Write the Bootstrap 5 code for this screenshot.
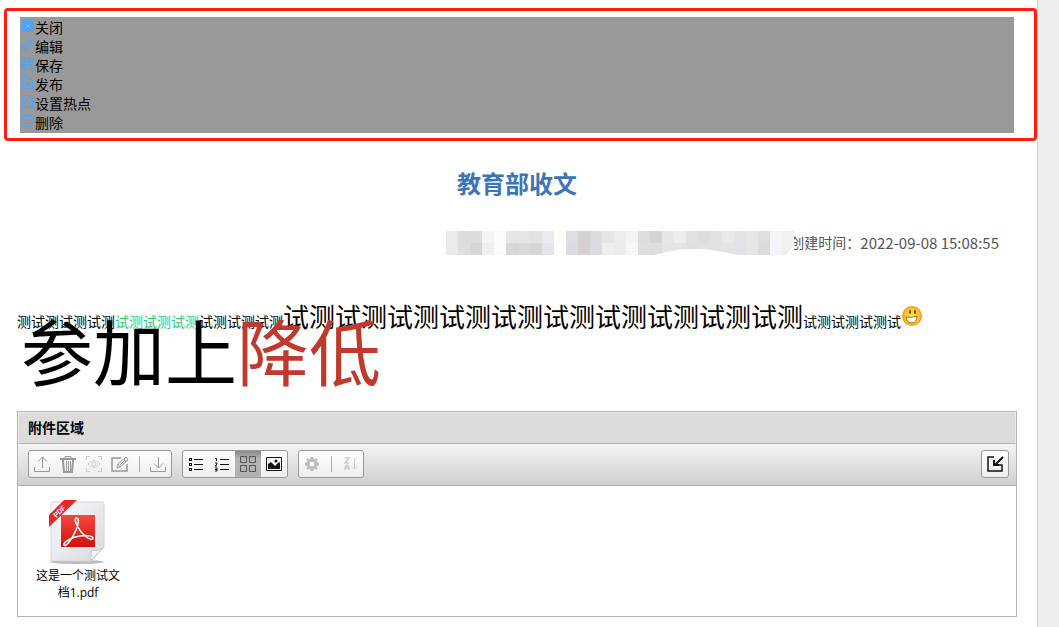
<!DOCTYPE html>
<html lang="zh-CN">
<head>
<meta charset="utf-8">
<meta name="viewport" content="width=device-width, initial-scale=1">
<title>教育部收文</title>
<link rel="stylesheet" href="https://cdn.jsdelivr.net/npm/bootstrap@5.3.0/dist/css/bootstrap.min.css">
<style>
body{font:14px/19px "Open Sans","Noto Sans CJK SC",sans-serif;color:#000;background:#fff}
svg{display:block;flex:none}
.sheet{min-width:0;padding-bottom:10px}
.gutter{width:22px;background:#eee;border-left:1px solid #d5d5d5}
.callout{margin:8px 0 0 4px;border:3px solid #ff1d12;border-radius:4px;padding:6px 20px 5px 13px}
.actions{background:#999;padding:1px 0}
.actions button{font-size:14px;line-height:19px;height:19px;color:#000}
.actions svg{color:#4da3f7;width:15px;height:15px}
.plain{border:0;background:none;padding:0}
.doc{padding:0 20px 0 17px}
.doc-title{margin:25px 0 28px;font-size:24px;line-height:36px;font-weight:700;color:#3c75b5;text-align:center}
.meta{height:24px;margin-top:29px;padding-right:18px;color:#555}
.meta span,.meta time{padding-bottom:2px}
.meta time{font-family:"Noto Sans CJK SC",sans-serif;font-size:15px}
.redacted{margin-right:-4px;z-index:1;position:relative}
.line-one{margin:44px 0 0;line-height:36px;height:36px}
.line-one .lg{font-size:26px}
.line-one svg{display:inline-block;vertical-align:baseline}
.line-two{margin:-21px 0 21px;padding-left:4px;font-size:72px;line-height:76px}
.panel{border:1px solid #b4b4b4}
.panel-head{margin:0;background:#dcdcdc;border:1px solid #ececec;border-bottom:1px solid #b4b4b4;height:32px;padding-left:9px;font-size:14px;line-height:30px;font-weight:700}
.tools{height:42px;padding:0 7px 2px 10px;gap:10px;background:linear-gradient(#f4f4f4,#cfd0ce);border-bottom:1px solid #b0b0b0}
.set{height:28px;border:1px solid #999;border-radius:3px;background:linear-gradient(#fff,#eee);overflow:hidden}
.set button{width:26px;height:26px;color:#111}
.set button:disabled{color:#999}
.set .faint:disabled{color:#ccc}
.set .on{background:linear-gradient(#888,#b5b5b5 8px,#b0b0b0);color:#555}
.sep{width:12px;height:16px;background:linear-gradient(#aaa,#aaa) center/1px 100% no-repeat}
.files{height:130px;padding:14px 10px 0}
.file{width:100px;font-size:12px;line-height:17px;color:#000;text-decoration:none;text-align:center}
.file span{width:86px}
</style>
<script src="https://cdn.jsdelivr.net/npm/bootstrap@5.3.0/dist/js/bootstrap.bundle.min.js"></script>
</head>
<body>
<div class="d-flex min-vh-100">
<main class="sheet flex-grow-1">
<nav class="callout" aria-label="操作">
<div class="actions d-flex flex-column align-items-start">
<button class="plain d-flex"><svg viewBox="0 0 15 15"><rect x="2" y="2" width="12" height="12" rx="1" fill="currentColor"/><path stroke="#8bb9e6" d="M6 6l4 4m0-4l-4 4"/></svg>关闭</button>
<button class="plain d-flex"><svg viewBox="0 0 15 15" fill="none" stroke="currentColor"><path d="M1.500 13.500l1-4 8-8 3 3-8 8zM3 9l3 3M5 10l6-6M8.500 3.500l3 3"/></svg>编辑</button>
<button class="plain d-flex"><svg viewBox="0 0 15 15" fill="none" stroke="currentColor"><path stroke-width="1.500" d="M7 13H2V2h9l2 2v3M5 2v4h5V2M4 13V9h4"/><circle cx="10" cy="10" r="2"/><path stroke-width="1.500" d="M11 11l3 3"/></svg>保存</button>
<button class="plain d-flex"><svg viewBox="0 0 15 15" fill="none" stroke="currentColor"><path d="M2.500 1.500h7l3 3v9h-10zM9.500 1.500v3h3"/><path stroke-width="1.500" d="M5 8.500h5M7 6l3 2.500-3 2.500"/></svg>发布</button>
<button class="plain d-flex"><svg viewBox="0 0 15 15" fill="none" stroke="currentColor"><path d="M2.500 1.500h7l3 3v9h-10zM9.500 1.500v3h3M7 5c0 2-2 3-2 5 0 3 5 3 5 0 0-1-1-2-1-2l-1 1z"/></svg>设置热点</button>
<button class="plain d-flex"><svg viewBox="0 0 15 15" fill="none" stroke="currentColor"><path d="M1 3.500h13M5.500 3V1.500h4V3M2.500 4l1 9.500h8l1-9.500M5.500 6v6m2-6v6m2-6v6"/></svg>删除</button>
</div>
</nav>
<article class="doc">
<h1 class="doc-title">教育部收文</h1>
<div class="meta d-flex justify-content-end align-items-center">
<svg class="redacted" id="redacted" width="348" height="24" viewBox="0 0 348 24" aria-hidden="true"></svg>
<span>创建时间：</span><time datetime="2022-09-08T15:08:55">2022-09-08 15:08:55</time>
</div>
<p class="line-one text-nowrap">测试测试测试测<span style="color:#2ecc71">试测试测试测</span>试测试测试测<span class="lg">试测试测试测试测试测试测试测试测试测试测</span>试测试测试测试<svg width="21" height="21" viewBox="0 0 21 21"><defs><radialGradient id="sun"><stop stop-color="#ffe56b"/><stop offset=".7" stop-color="#fdc62c"/><stop offset="1" stop-color="#ee9712"/></radialGradient></defs><circle cx="11" cy="10" r="10" fill="url(#sun)"/><ellipse cx="9" cy="6" rx="1" ry="2" fill="#74400b"/><ellipse cx="14" cy="6" rx="1" ry="2" fill="#74400b"/><path fill="#fff" stroke="#b06a12" d="M5 11q6 1 11-1 0 6-5 7-5 0-6-6z"/></svg></p>
<p class="line-two text-nowrap">参加上<span style="color:#c0392b">降低</span></p>
<section class="panel">
<h2 class="panel-head">附件区域</h2>
<div class="tools d-flex align-items-center">
<div class="set d-flex align-items-center">
<button class="plain" disabled aria-label="上传"><svg class="m-auto" width="18" height="18" fill="none" stroke="currentColor"><path d="M9.500 13V2M5 6.500L9.500 2 14 6.500M1.500 12v4.500h15V12"/></svg></button>
<button class="plain" disabled aria-label="删除"><svg class="m-auto" width="18" height="18" fill="none" stroke="currentColor"><path stroke-width="2" d="M1 4h16M4 5l1 12h8l1-12"/><path d="M6 3V1.500h6V3M7.500 6v10m2-10v10m2-10v10"/></svg></button>
<button class="plain faint" disabled aria-label="预览"><svg class="m-auto" width="18" height="18" fill="none" stroke="currentColor"><path d="M1.500 5V1.500H5m8 0h3.500V5m0 8v3.500H13m-8 0H1.500V13M3 9q6-7 12 0-6 7-12 0z"/><circle cx="9" cy="9" r="2"/></svg></button>
<button class="plain" disabled aria-label="编辑"><svg class="m-auto" width="18" height="18" fill="none" stroke="currentColor"><path stroke-width="1.500" d="M10 3H1v13h15V9"/><path d="M6 13l1-4 8-7 2 3-8 7zM7 9l2 3m4-8l2 3m-6 3l5-5"/></svg></button>
<span class="sep"></span>
<button class="plain" disabled aria-label="下载"><svg class="m-auto" width="18" height="18" fill="none" stroke="currentColor"><path d="M9.500 2v11M5 8.500l4.500 4.500L14 8.500M1.500 12v4.500h15V12"/></svg></button>
</div>
<div class="set d-flex">
<button class="plain" aria-label="列表"><svg class="m-auto" width="16" height="16" fill="none" stroke="currentColor"><path d="M6 3.500h9m-9 5h9m-9 5h9"/><path stroke-width="3" d="M1 3.500h3m-3 5h3m-3 5h3"/><path stroke="#ddd" d="M2 3.500h1m-1 5h1m-1 5h1"/></svg></button>
<button class="plain" aria-label="编号列表"><svg class="m-auto" width="16" height="16" fill="none" stroke="currentColor"><path d="M6 3.500h9m-9 5h9m-9 5h9M1 2.500h1.500V5M1 7h2v1L1 10h2M1 12h2v3H1m0-1.500h2"/></svg></button>
<button class="plain on" aria-label="缩略图" aria-pressed="true"><svg class="m-auto" width="18" height="18" fill="none" stroke="currentColor"><path d="M1.500 1.500h6v6h-6zm9 0h6v6h-6zm-9 9h6v6h-6zm9 0h6v6h-6z"/></svg></button>
<button class="plain" aria-label="图片"><svg class="m-auto" width="18" height="18"><path fill="none" stroke="currentColor" d="M1.500 2.500h15v13h-15z"/><path fill="currentColor" d="M3 14V9l3-2 4 4 4-4 1 1v6z"/><circle cx="11" cy="6" r="1.500"/></svg></button>
</div>
<div class="set d-flex align-items-center">
<button class="plain faint" disabled aria-label="设置"><svg class="m-auto" width="18" height="18" fill="none" stroke="#bbb"><circle cx="9" cy="9" r="4" stroke-width="3"/><path stroke-width="3" d="M9 2v2m0 10v2M2 9h2m10 0h2M4 4l1 1m8 8l1 1m0-10l-1 1m-8 8l-1 1"/></svg></button>
<span class="sep"></span>
<button class="plain faint" disabled aria-label="排序"><svg class="m-auto" width="18" height="18" fill="none" stroke="#ccc"><path stroke-width="1.500" d="M4 3h4L4 8h4M4 15v-3l2-2 2 2v3m-4-2h4"/><path d="M13.500 3v11m-2.500-2.500l2.500 2.500 2.500-2.500"/></svg></button>
</div>
<div class="set ms-auto"><button class="plain" aria-label="收起"><svg class="m-auto" width="20" height="20" fill="none" stroke="currentColor" stroke-width="2"><path stroke-width="1.500" d="M9 3H3v14h14v-6h-7"/><path d="M18 3l-8 8M9 6v5h5"/></svg></button></div>
</div>
<div class="files">
<a href="#" class="file d-flex flex-column align-items-center">
<svg width="60" height="67" viewBox="0 0 60 67"><defs><linearGradient id="paper" x2="1" y2="1"><stop stop-color="#fafafc"/><stop offset="1" stop-color="#d9dae2"/></linearGradient><linearGradient id="red" x2="0" y2="1"><stop stop-color="#f5493f"/><stop offset="1" stop-color="#d1100d"/></linearGradient></defs><ellipse cx="29" cy="62" rx="27" ry="2" fill="#bbb"/><path fill="url(#paper)" stroke="#d5d6dc" d="M3 5q0-3 3-3h48q2 0 2 2v43L43 61H3z"/><path fill="#f8f8fa" stroke="#c7c8d0" d="M56 47Q51 52 43 50q1 7-1 11z"/><path fill="url(#red)" d="M13 15h34v32H13z"/><path fill="none" stroke="#fff" stroke-width="1.500" d="M29 18c-5 0 2 13 8 18 5 4 8 4 8 2s-6-3-13-2c-8 1-17 6-16 9 2 3 9-8 12-15 3-6 3-12 1-12z"/><path fill="#e12a24" d="M1 15L16 0h13L1 27z"/><text x="0" y="3" transform="translate(11 11) rotate(-45)" text-anchor="middle" font-family="Liberation Sans,sans-serif" font-size="7" font-weight="700" fill="#fff">PDF</text></svg>
<span>这是一个测试文档1.pdf</span>
</a>
</div>
</section>
</article>
</main>
<div class="gutter"></div>
</div>
<script>
// Mosaic over the private fields: two rows of 12px cells
const rows = [
 'ecebea dddde1 dbdcdc f4f4f5 fbfbfb e6e5e3 e4e5e8 e3e2e0 e9ecee fefdfb dddee2 d4d1ce dadcdf e6e6e6 ecedf0 f4f3f1 dcdddd d2d4d6 e6e6e7 eeeeee e1e1e1 dedede e2e2e2 e9e9ea e4e4e4 e6e6e6 dfdedc f3f5f8 f2f1ef',
 'ecebea dedee2 d6d6d8 eef0f0 fbfbfb d9d7d6 dadada d6d6d8 e1e6e8 ffffff dadce2 d4d1ce dadcdf eeeeee ebecee f7f7f6 dfdfe0 dddee0 e4e4e4 e4e4e4 dfdfdf e1e1e1 e1e1e1 e4e4e4 e0e4e8 e6e6e6 dddbd9 f3f5f8 f2f1ef'
];
document.getElementById('redacted').innerHTML = rows.map((r, y) => r.split(' ').map((c, x) =>
  `<rect x="${x * 12}" y="${y * 12}" width="12" height="12" fill="#${c}"/>`).join('')).join('') +
  '<path fill="#fff" d="M208 24Q230 18 242 18h18q12 2 32 6zM340 24l5-6 3-6v12z"/>';
</script>
</body>
</html>
